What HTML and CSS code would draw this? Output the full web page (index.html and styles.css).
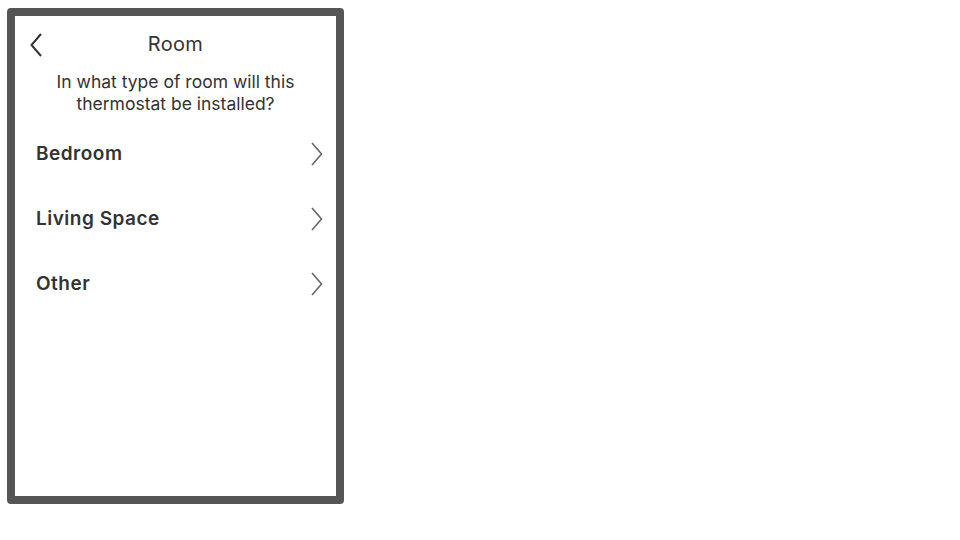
FILE: index.html
```html
<!DOCTYPE html>
<html>
<head>
<meta charset="utf-8">
<link rel="stylesheet" href="styles.css">
</head>
<body>
<div class="device">
  <div class="header">
    <span class="back">
      <svg width="12" height="24" viewBox="0 0 12 24"><path d="M11 1 L1.5 12 L11 23" fill="none" stroke="#333" stroke-width="2"/></svg>
    </span>
    <div class="title">Room</div>
  </div>
  <div class="question">In what type of room will this<br>thermostat be installed?</div>
  <ul class="list">
    <li class="item"><span>Bedroom</span><svg class="chev" width="12" height="24" viewBox="0 0 12 24"><path d="M1 1 L10.5 12 L1 23" fill="none" stroke="#666" stroke-width="1.6"/></svg></li>
    <li class="item"><span>Living Space</span><svg class="chev" width="12" height="24" viewBox="0 0 12 24"><path d="M1 1 L10.5 12 L1 23" fill="none" stroke="#666" stroke-width="1.6"/></svg></li>
    <li class="item"><span>Other</span><svg class="chev" width="12" height="24" viewBox="0 0 12 24"><path d="M1 1 L10.5 12 L1 23" fill="none" stroke="#666" stroke-width="1.6"/></svg></li>
  </ul>
</div>
</body>
</html>
```
FILE: styles.css
```css
html, body { margin: 0; padding: 0; background: #fff; }
body { font-family: Inter, "Noto Sans", sans-serif; color: #333; }
.device {
  box-sizing: border-box;
  width: 337px;
  height: 496px;
  margin: 8px 0 0 7px;
  border: 8px solid #555;
  border-radius: 4px;
  background: #fff;
}
.header {
  position: relative;
  padding-top: 15px;
  height: 26px;
}
.back {
  position: absolute;
  left: 15px;
  top: 17px;
  display: block;
  width: 12px;
  height: 24px;
}
.back svg, .chev { display: block; }
.title {
  text-align: center;
  font-size: 20px;
  line-height: 26px;
  font-weight: 400;
  letter-spacing: 0.3px;
  color: #333;
}
.question {
  margin-top: 14px;
  text-align: center;
  font-size: 17.5px;
  line-height: 22px;
  color: #333;
}
.list {
  list-style: none;
  margin: 6px 0 0 0;
  padding: 0;
}
.item {
  display: flex;
  align-items: center;
  justify-content: space-between;
  height: 65px;
  padding: 0 13px 0 21px;
  font-size: 19px;
  font-weight: 600;
  letter-spacing: 0.5px;
  color: #333;
}
```
